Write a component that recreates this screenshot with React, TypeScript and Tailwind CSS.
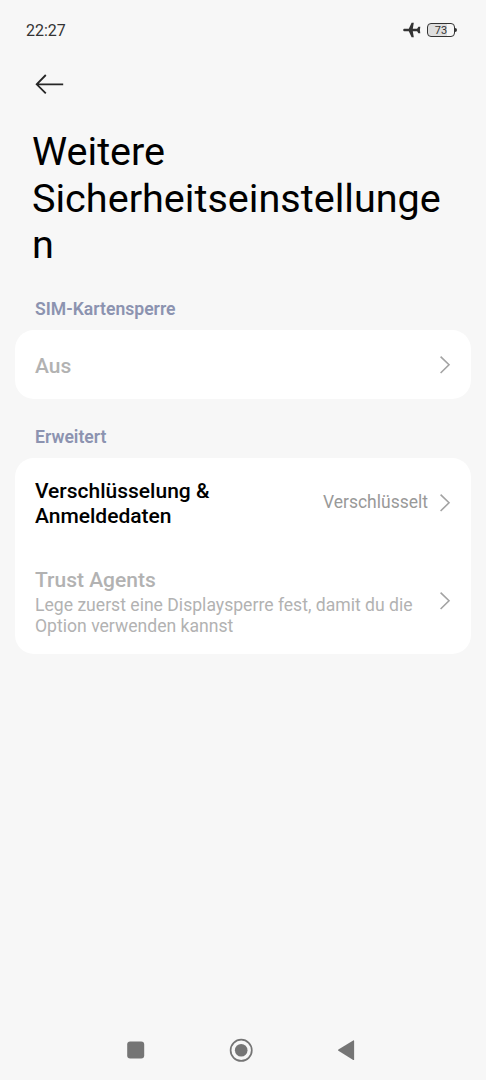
import type { ReactNode } from "react";

type SettingRowProps = {
  title: ReactNode;
  summary?: ReactNode;
  value?: string;
  disabled?: boolean;
  className: string;
};

function Chevron() {
  return (
    <svg className="shrink-0" width="12" height="20" viewBox="0 0 12 20" fill="none" stroke="#a3a3a3" strokeWidth="1.6">
      <path d="M1.6 1.6 10 9.8l-8.4 8.2" />
    </svg>
  );
}

function SettingRow({ title, summary, value, disabled, className }: SettingRowProps) {
  return (
    <button type="button" className={`flex w-full items-center pr-5 pl-5 text-left ${className}`}>
      <div className="flex-1 pt-[3px] whitespace-nowrap">
        <div className={`text-[21px] leading-[24.6px] font-medium ${disabled ? "text-[#b2b2b2]" : "text-black"}`}>
          {title}
        </div>
        {summary && (
          <div className="mt-[3px] text-[17.6px] leading-[20.6px] text-[#b2b2b2]">{summary}</div>
        )}
      </div>
      {value && <span className="mr-[11px] text-[17.5px] text-[#999999]">{value}</span>}
      <Chevron />
    </button>
  );
}

function SectionLabel({ children, className }: { children: ReactNode; className: string }) {
  return (
    <h2 className={`px-[35px] text-[17.6px] leading-5 font-semibold text-[#8c93b0] ${className}`}>{children}</h2>
  );
}

function StatusBar() {
  return (
    <div className="flex h-[60px] items-center justify-between pr-[29px] pl-[26px] text-[#333333]">
      <span className="pt-px text-[16px]">22:27</span>
      <div className="flex items-center gap-[6px]">
        <svg width="18" height="16" viewBox="0 0 18 16" fill="#333333">
          <path d="M.2 8c0-.8.6-1.3 1.4-1.3h4.2L8.6.8h2.2l-1 5.9h4.3l1.3-2h1.9L16.9 8l.4 3.3h-1.9l-1.3-2H9.8l1 5.9H8.6L5.8 9.3H1.6C.8 9.3.2 8.8.2 8Z" />
        </svg>
        <div className="flex items-center">
          <div className="flex h-[14px] w-[28px] items-center justify-center rounded-[4px] border-[1.5px] border-[#333333] bg-linear-to-r from-[#dedede] from-73% to-[#f7f7f7] to-73% pt-px text-[11px] leading-none">
            73
          </div>
          <div className="h-1 w-[2px] rounded-r-sm bg-[#333333]" />
        </div>
      </div>
    </div>
  );
}

function NavigationBar() {
  return (
    <nav className="mt-auto flex h-[60px] items-center pl-[127px]">
      <svg width="18" height="18" viewBox="0 0 18 18" fill="#757575">
        <rect x=".2" y=".5" width="17" height="17" rx="3" />
      </svg>
      <svg className="ml-[84px]" width="24" height="24" viewBox="0 0 24 24">
        <circle cx="12.2" cy="12.3" r="10.6" fill="none" stroke="#757575" strokeWidth="1.7" />
        <circle cx="12.2" cy="12.3" r="6.3" fill="#757575" />
      </svg>
      <svg className="ml-[84px]" width="18" height="22" viewBox="0 0 18 22" fill="#757575">
        <path d="M1.4 10.5 16.2 1.4q.9-.5.9.5v18.500q0 1-.9.5L1.4 11.800q-.9-.6 0-1.3Z" />
      </svg>
    </nav>
  );
}

export default function App() {
  return (
    <main className="flex h-[1080px] w-[486px] flex-col overflow-hidden bg-[#f7f7f7] font-['Roboto',sans-serif]">
      <StatusBar />

      <div className="flex h-12 items-center pl-[35px]">
        <button type="button" aria-label="Zurück">
          <svg width="30" height="22" viewBox="0 0 30 22" fill="none" stroke="#262626" strokeWidth="1.8">
            <path d="M28.2 11.3H2M10.8 2 1.7 11.3l9.1 9.1" />
          </svg>
        </button>
      </div>

      <h1 className="mt-[21.4px] px-[32px] text-[39.6px] leading-[46.4px] break-all text-black">
        Weitere
        <br />
        Sicherheitseinstellungen
      </h1>

      <SectionLabel className="mt-[30.4px]">SIM-Kartensperre</SectionLabel>
      <section className="mx-[15px] mt-[11px] rounded-[19px] bg-white">
        <SettingRow className="h-[69px]" title="Aus" disabled />
      </section>

      <SectionLabel className="mt-[28px]">Erweitert</SectionLabel>
      <section className="mx-[15px] mt-[11px] rounded-[19px] bg-white">
        <SettingRow
          className="h-[89px]"
          title={
            <>
              Verschlüsselung &amp;
              <br />
              Anmeldedaten
            </>
          }
          value="Verschlüsselt"
        />
        <SettingRow
          className="h-[107px]"
          title="Trust Agents"
          summary={
            <>
              Lege zuerst eine Displaysperre fest, damit du die
              <br />
              Option verwenden kannst
            </>
          }
          disabled
        />
      </section>

      <NavigationBar />
    </main>
  );
}
